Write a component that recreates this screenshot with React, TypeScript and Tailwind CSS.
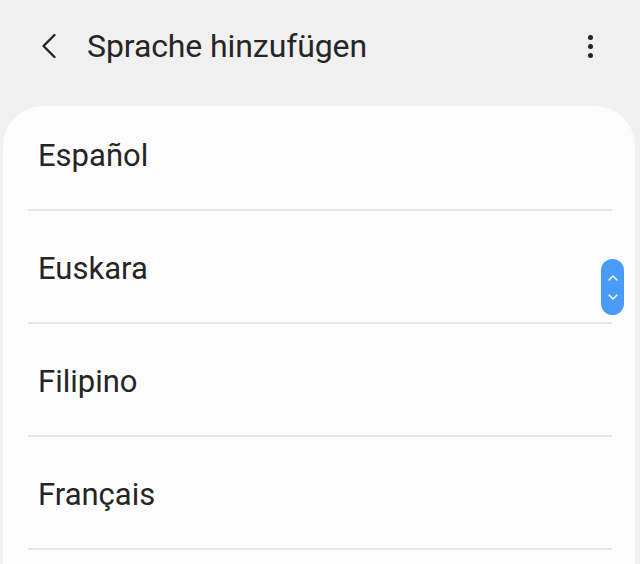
const languages = ["Español", "Euskara", "Filipino", "Français"];

export default function App() {
  return (
    <div
      className="relative h-[564px] w-[640px] overflow-hidden bg-[#f0f0f0] text-[#252525]"
      style={{ fontFamily: "Roboto, 'Noto Sans', sans-serif" }}
    >
      <header className="flex h-[106px] items-start pt-[24px]">
        <button className="ml-[37px] flex h-[44px] w-[24px] items-center justify-center">
          <svg width="18" height="26" viewBox="0 0 18 26" fill="none">
            <path d="M14.5 2 L3.5 13 L14.5 24" stroke="#252525" strokeWidth="2.4" strokeLinecap="round" strokeLinejoin="round" />
          </svg>
        </button>
        <h1 className="ml-[26px] flex h-[44px] items-center text-[32px] font-normal tracking-[-0.1px]">
          Sprache hinzufügen
        </h1>
        <div className="ml-auto mr-[47px] flex h-[44px] flex-col items-center justify-center gap-[4px]">
          <span className="h-[5px] w-[5px] rounded-full bg-[#252525]" />
          <span className="h-[5px] w-[5px] rounded-full bg-[#252525]" />
          <span className="h-[5px] w-[5px] rounded-full bg-[#252525]" />
        </div>
      </header>

      <main className="ml-[3px] mr-[5px] h-[480px] overflow-hidden rounded-t-[40px] bg-[#fcfcfc]">
        <ul className="mt-[-8px]">
          {languages.map((lang) => (
            <li key={lang} className="ml-[25px] mr-[23px] flex h-[113px] items-center border-b-2 border-[#e6e6e6] px-[10px] pt-[5px] text-[31px]">
              {lang}
            </li>
          ))}
        </ul>
      </main>

      <div className="absolute left-[601px] top-[259px] flex h-[56px] w-[23px] flex-col items-center justify-center gap-[13px] rounded-full bg-[#4a9bf5]">
        <svg width="10" height="6" viewBox="0 0 10 6" fill="none">
          <path d="M1 5 L5 1 L9 5" stroke="white" strokeWidth="1.4" strokeLinecap="round" strokeLinejoin="round" />
        </svg>
        <svg width="10" height="6" viewBox="0 0 10 6" fill="none">
          <path d="M1 1 L5 5 L9 1" stroke="white" strokeWidth="1.4" strokeLinecap="round" strokeLinejoin="round" />
        </svg>
      </div>
    </div>
  );
}
